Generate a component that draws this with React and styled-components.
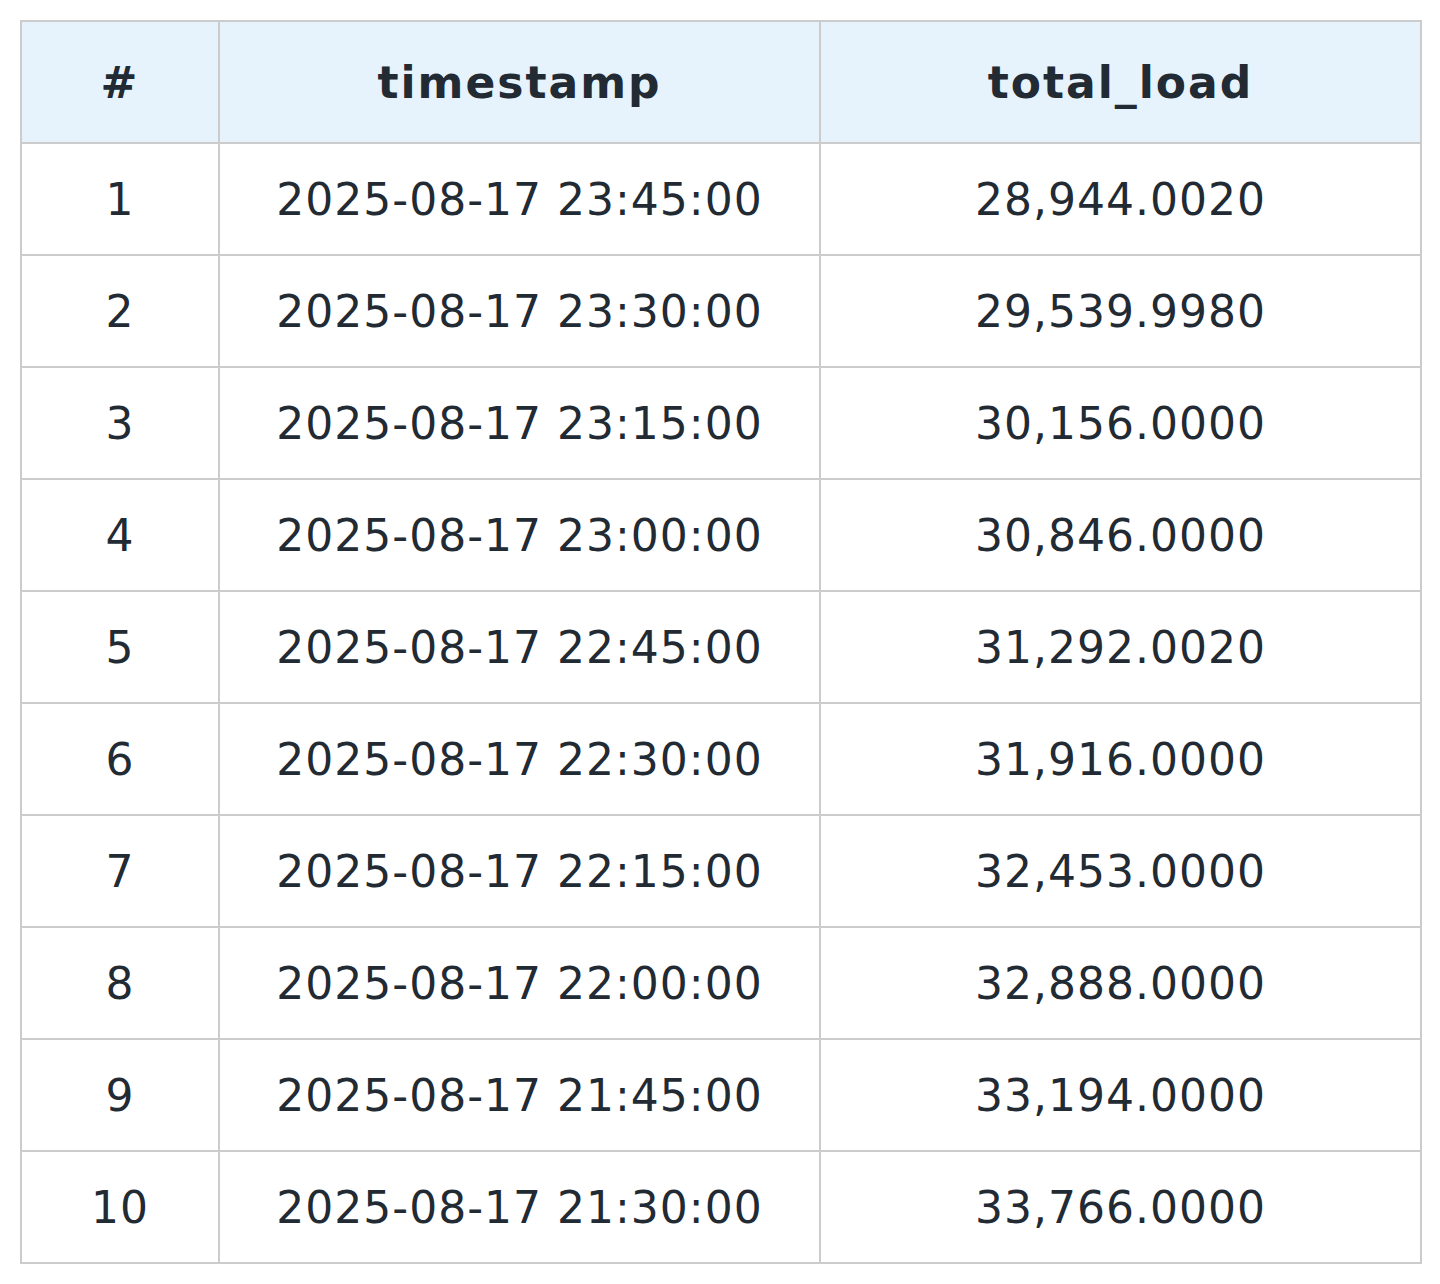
import React from "react";
import styled, { createGlobalStyle } from "styled-components";

const Global = createGlobalStyle`
  body { margin: 0; background: #fff; font-family: "DejaVu Sans", Verdana, sans-serif; }
`;

const Wrap = styled.div`
  padding: 20px;
`;

const Table = styled.table`
  width: 1400px;
  border-collapse: collapse;
  table-layout: fixed;
  color: #222a33;
  font-size: 44px;
`;

const Th = styled.th`
  background: #e6f3fc;
  border: 2px solid #cccccc;
  height: 120px;
  font-weight: bold;
  letter-spacing: 2px;
  text-align: center;
  padding: 0;
`;

const Td = styled.td`
  border: 2px solid #cccccc;
  height: 110px;
  letter-spacing: 1px;
  text-align: center;
  padding: 0;
`;

const rows = [
  ["2025-08-17 23:45:00", "28,944.0020"],
  ["2025-08-17 23:30:00", "29,539.9980"],
  ["2025-08-17 23:15:00", "30,156.0000"],
  ["2025-08-17 23:00:00", "30,846.0000"],
  ["2025-08-17 22:45:00", "31,292.0020"],
  ["2025-08-17 22:30:00", "31,916.0000"],
  ["2025-08-17 22:15:00", "32,453.0000"],
  ["2025-08-17 22:00:00", "32,888.0000"],
  ["2025-08-17 21:45:00", "33,194.0000"],
  ["2025-08-17 21:30:00", "33,766.0000"],
];

export default function App() {
  return (
    <Wrap>
      <Global />
      <Table>
        <colgroup>
          <col style={{ width: 198 }} />
          <col style={{ width: 601 }} />
          <col style={{ width: 601 }} />
        </colgroup>
        <thead>
          <tr>
            <Th>#</Th>
            <Th>timestamp</Th>
            <Th>total_load</Th>
          </tr>
        </thead>
        <tbody>
          {rows.map((r, i) => (
            <tr key={i}>
              <Td>{i + 1}</Td>
              <Td>{r[0]}</Td>
              <Td>{r[1]}</Td>
            </tr>
          ))}
        </tbody>
      </Table>
    </Wrap>
  );
}
